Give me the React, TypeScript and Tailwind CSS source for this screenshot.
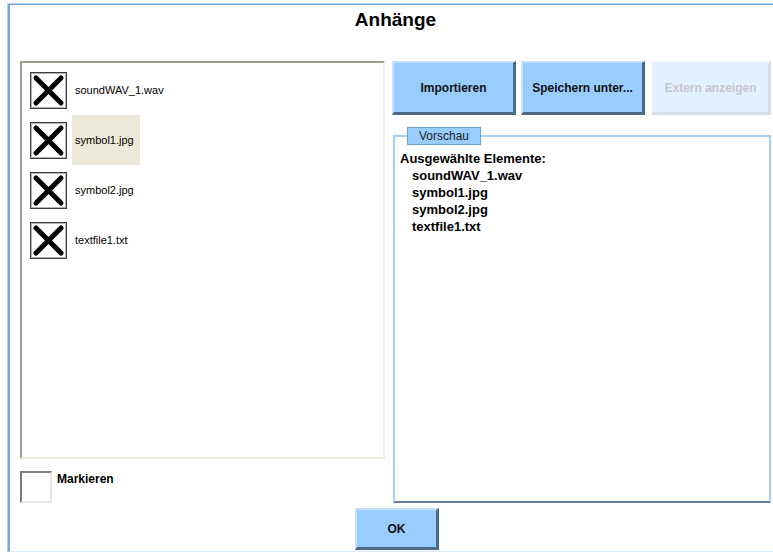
import React from "react";

const files = ["soundWAV_1.wav", "symbol1.jpg", "symbol2.jpg", "textfile1.txt"];

function XBox() {
  return (
    <svg width="37" height="37" viewBox="0 0 37 37" className="shrink-0">
      <rect x="0.5" y="0.5" width="36" height="36" fill="#ffffff" stroke="#3c3c3c" strokeWidth="1" />
      <rect x="1.5" y="1.5" width="34" height="34" fill="none" stroke="#b4b4b4" strokeWidth="1" />
      <line x1="6" y1="6" x2="31" y2="31" stroke="#000" strokeWidth="5" strokeLinecap="round" />
      <line x1="31" y1="6" x2="6" y2="31" stroke="#000" strokeWidth="5" strokeLinecap="round" />
    </svg>
  );
}

function Btn({ label, w, disabled }: { label: string; w: string; disabled?: boolean }) {
  return (
    <div
      className={
        disabled
          ? `${w} h-full flex items-center justify-center bg-[#e2f1ff] border-t-2 border-l-2 border-r-[3px] border-b-[3px] border-t-[#eef7ff] border-l-[#eef7ff] border-r-[#d4dce4] border-b-[#d4dce4] text-[12px] font-bold text-[#c4c8cc]`
          : `${w} h-full flex items-center justify-center bg-[#99ccff] border-t-2 border-l-2 border-r-[3px] border-b-[3px] border-t-[#c4e2ff] border-l-[#c4e2ff] border-r-[#4b6884] border-b-[#4b6884] text-[12px] font-bold text-[#111]`
      }
    >
      {label}
    </div>
  );
}

export default function App() {
  return (
    <div
      className="w-[773px] h-[552px] bg-white overflow-hidden pt-[3px] pl-[7px]"
      style={{ fontFamily: '"Liberation Sans", Arial, sans-serif' }}
    >
      <div className="w-[774px] h-[549px] border-l border-t border-[#acd2f6]">
        <div className="w-full h-full border-l-2 border-t border-[#76a6da] border-b border-b-[#d8eafc] flex flex-col">
          {/* title */}
          <div className="h-[56px] pt-[4px] flex justify-center">
            <div className="text-[19px] leading-[22px] font-bold text-black">Anhänge</div>
          </div>

          {/* main */}
          <div className="flex pl-[10px]">
            {/* left column */}
            <div className="w-[365px] flex flex-col">
              <div className="h-[398px] border-2 border-t-[#a09c90] border-l-[#a09c90] border-r-[#f0eee4] border-b-[#f0eee4] bg-white pt-[2px] pl-[8px]">
                {files.map((f, i) => (
                  <div key={f} className="h-[50px] flex items-center">
                    <XBox />
                    <div
                      className={`ml-[5px] h-full flex items-center pl-[3px] pr-[6px] text-[11px] text-black ${
                        i === 1 ? "bg-[#ece9d8]" : ""
                      }`}
                    >
                      {f}
                    </div>
                  </div>
                ))}
              </div>
              <div className="mt-[12px] flex items-start">
                <div className="w-[32px] h-[32px] bg-white border-2 border-t-[#7a7a7a] border-l-[#7a7a7a] border-r-[#e6e6e6] border-b-[#e6e6e6]" />
                <div className="ml-[5px] text-[12px] leading-[16px] font-bold text-black">Markieren</div>
              </div>
            </div>

            {/* right column */}
            <div className="ml-[7px] w-[379px] flex flex-col">
              <div className="h-[54px] flex">
                <Btn label="Importieren" w="w-[124px]" />
                <div className="w-[5px]" />
                <Btn label="Speichern unter..." w="w-[124px]" />
                <div className="w-[6px]" />
                <Btn label="Extern anzeigen" w="w-[120px]" disabled />
              </div>
              <div className="relative mt-[20px] ml-[1px] h-[368px] border-2 border-[#a4d0fa] border-b-[#5e7d9c] bg-white pt-[13px] pl-[5px]">
                <div className="absolute left-[12px] top-[-10px] w-[74px] h-[18px] bg-[#99ccff] border border-[#6f9fd0] flex items-center justify-center text-[12px] text-[#222]">
                  Vorschau
                </div>
                <div className="text-[13px] leading-[17px] font-bold text-black">
                  <div>Ausgewählte Elemente:</div>
                  {files.map((f) => (
                    <div key={f} className="pl-[12px]">
                      {f}
                    </div>
                  ))}
                </div>
              </div>
            </div>
          </div>

          {/* OK */}
          <div className="mt-[5px] pl-[345px] flex">
            <div className="w-[84px] h-[42px] flex items-center justify-center bg-[#99ccff] border-t-2 border-l-2 border-r-[3px] border-b-[3px] border-t-[#c4e2ff] border-l-[#c4e2ff] border-r-[#4b6884] border-b-[#4b6884] text-[12px] font-bold text-[#111]">
              OK
            </div>
          </div>
        </div>
      </div>
    </div>
  );
}
